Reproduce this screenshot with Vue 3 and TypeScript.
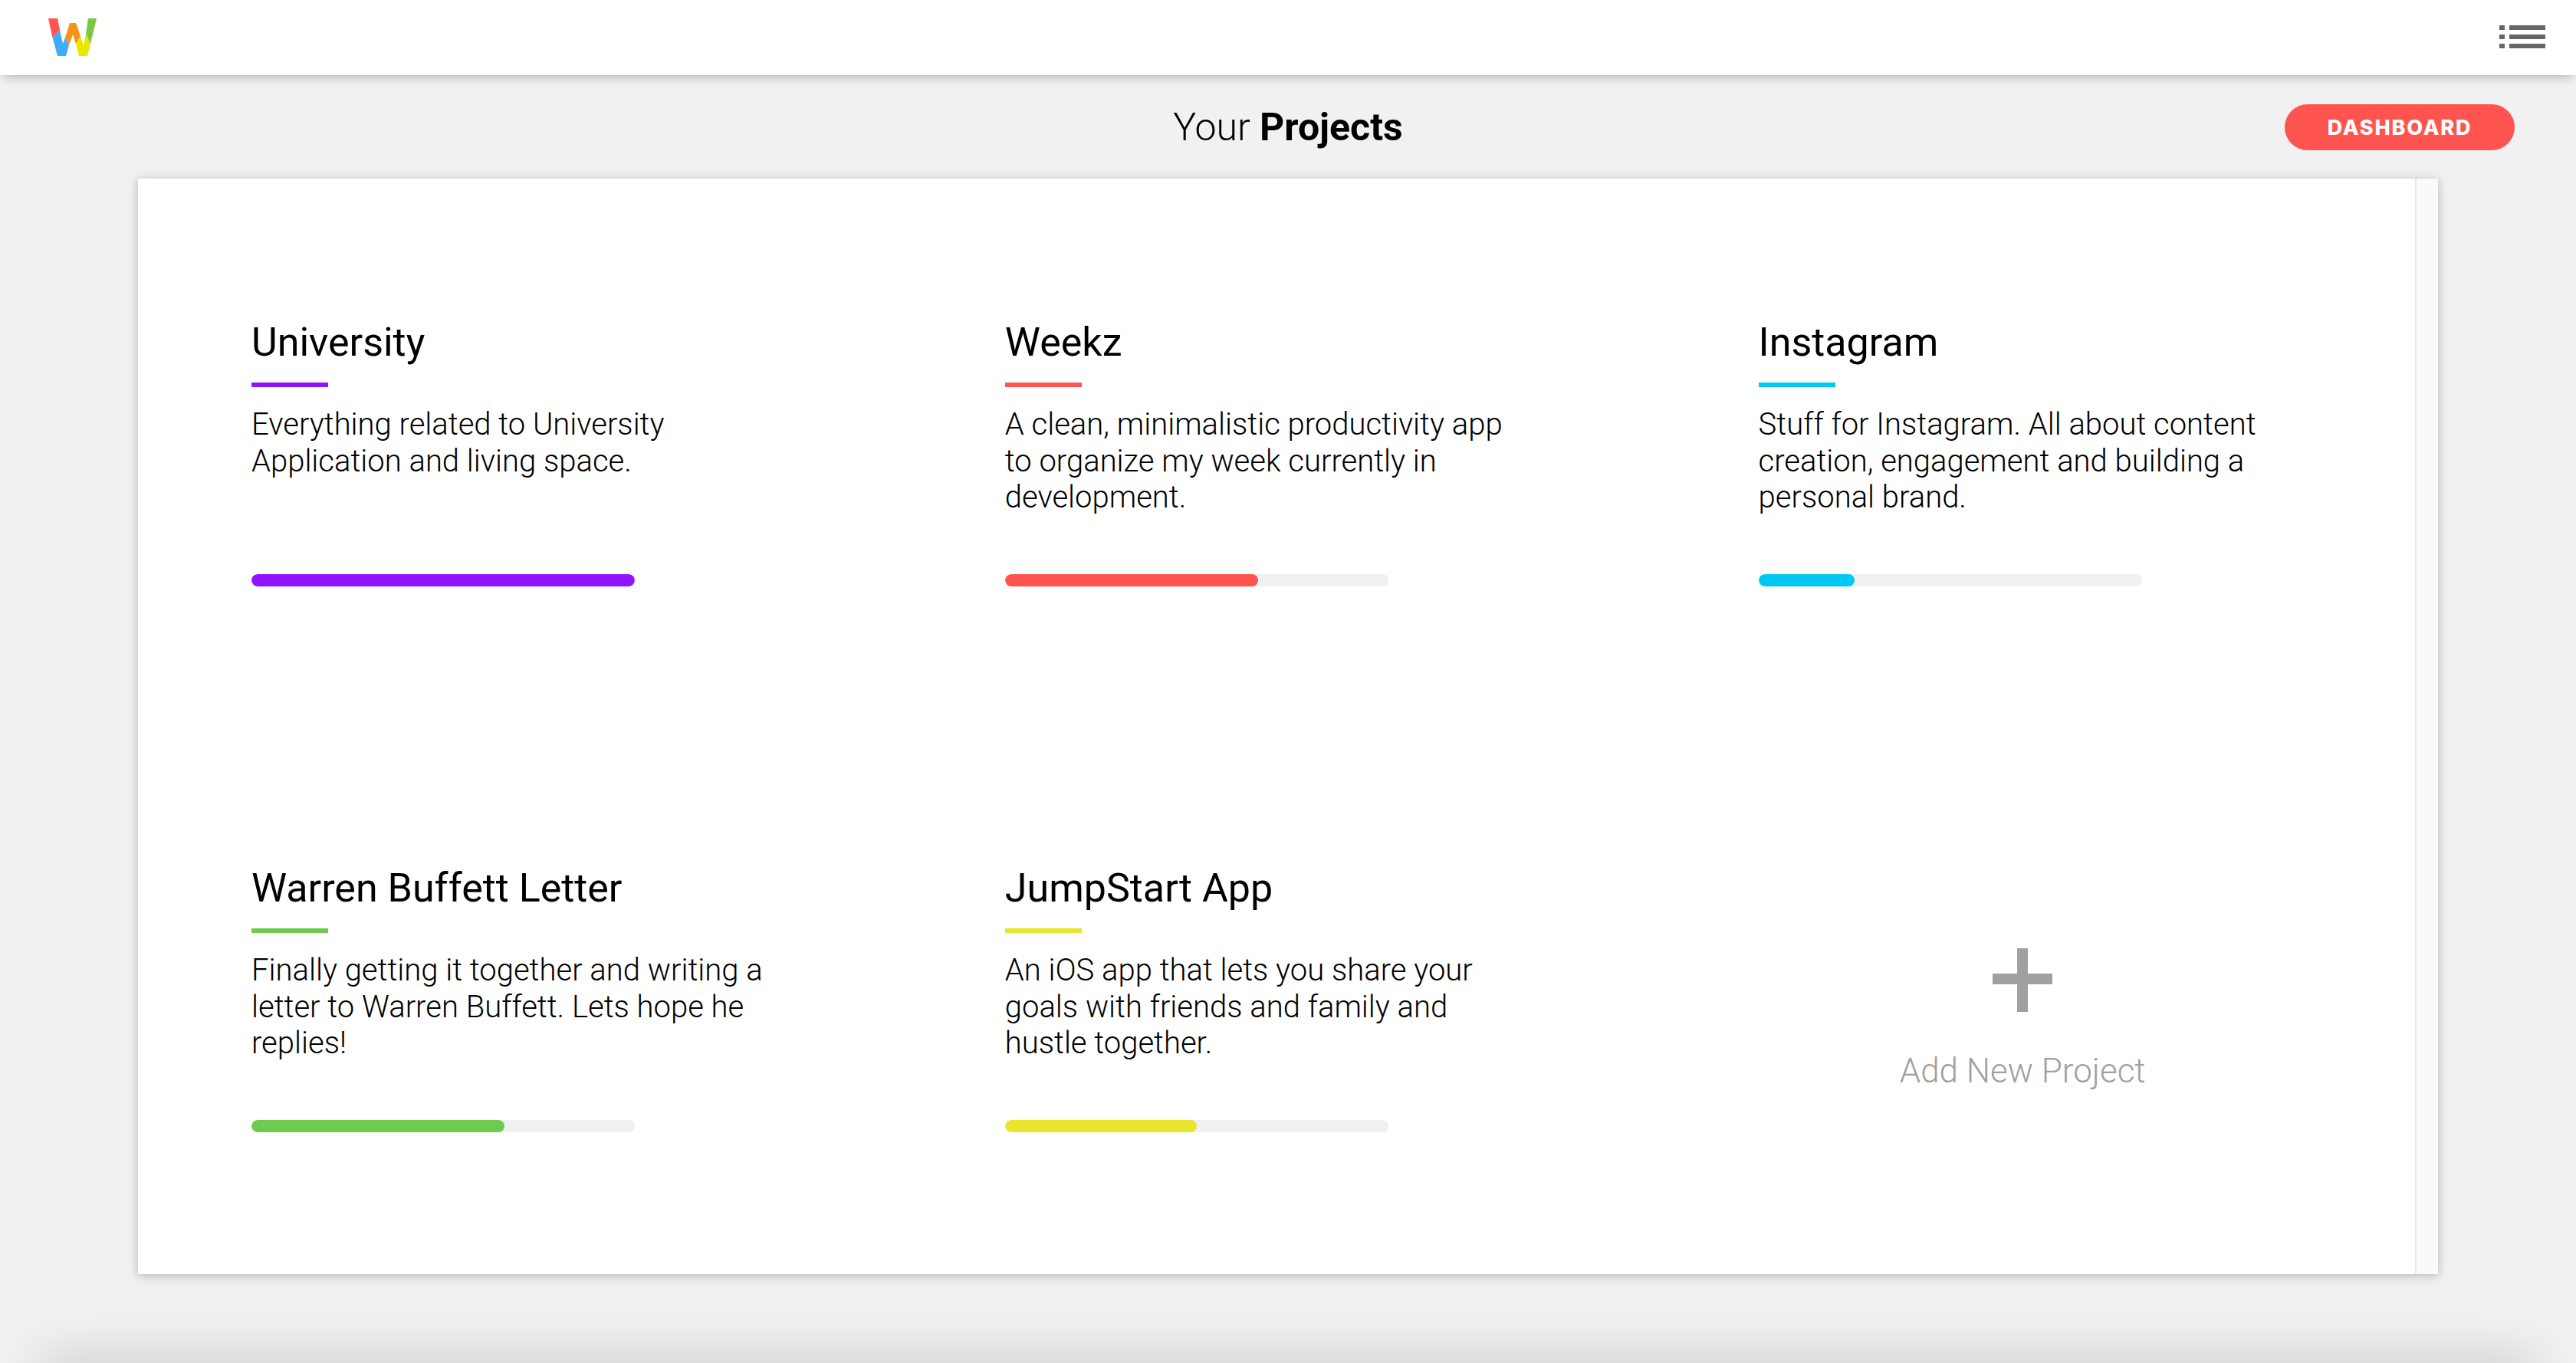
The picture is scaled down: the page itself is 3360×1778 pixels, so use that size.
<template>
  <div class="page">
    <header class="topbar">
      <svg class="logo" viewBox="63 24 64 50" width="64" height="50">
        <polygon points="63,24 75,24 78,39 68.5,49" fill="#ff5450" />
        <polygon points="68.5,49 78,39 82,57 85,49 90,59 86,73 75,73" fill="#3badfb" />
        <polygon points="85,49 91,30 99,30 105,47 99,57 95,45 90,59" fill="#f7931a" />
        <polygon points="99,57 105,47 109,59 112,44 118,57 114,73 103,73" fill="#e9e800" />
        <polygon points="115,24 126,24 118,57 112,44" fill="#7ac943" />
      </svg>
      <svg class="menu" viewBox="0 0 60 30" width="60" height="30">
        <g v-for="y in [0, 12, 24]" :key="y" fill="#666">
          <rect x="0" :y="y" width="7" height="6" />
          <rect x="13" :y="y" width="47" height="6" />
        </g>
      </svg>
    </header>

    <div class="heading">
      <h1>Your <strong>Projects</strong></h1>
      <button class="dash">DASHBOARD</button>
    </div>

    <main class="panel">
      <div class="grid">
        <section v-for="p in projects" :key="p.name" class="card">
          <h2>{{ p.name }}</h2>
          <div class="rule" :style="{ background: p.color }"></div>
          <p>{{ p.text }}</p>
          <div class="track">
            <div class="fill" :style="{ width: p.progress + '%', background: p.color }"></div>
          </div>
        </section>
        <section class="add">
          <svg class="plus" viewBox="0 0 78 83" width="78" height="83">
            <rect x="32" y="0" width="14" height="83" fill="#a0a0a0" />
            <rect x="0" y="33" width="78" height="14" fill="#a0a0a0" />
          </svg>
          <span>Add New Project</span>
        </section>
      </div>
      <div class="side"></div>
    </main>

    <div class="under"></div>
  </div>
</template>

<script setup lang="ts">
interface Project {
  name: string
  text: string
  color: string
  progress: number
}

const projects: Project[] = [
  {
    name: 'University',
    text: 'Everything related to University Application and living space.',
    color: '#9013fe',
    progress: 100
  },
  {
    name: 'Weekz',
    text: 'A clean, minimalistic productivity app to organize my week currently in development.',
    color: '#ff5450',
    progress: 66
  },
  {
    name: 'Instagram',
    text: 'Stuff for Instagram. All about content creation, engagement and building a personal brand.',
    color: '#00c8f0',
    progress: 25
  },
  {
    name: 'Warren Buffett Letter',
    text: 'Finally getting it together and writing a letter to Warren Buffett. Lets hope he replies!',
    color: '#6fcb4f',
    progress: 66
  },
  {
    name: 'JumpStart App',
    text: 'An iOS app that lets you share your goals with friends and family and hustle together.',
    color: '#e9e52c',
    progress: 50
  }
]
</script>

<style>
html,
body {
  margin: 0;
  background: #f1f1f1;
}
</style>

<style scoped>
.page {
  position: relative;
  height: 1778px;
  overflow: hidden;
  font-family: Roboto, "Liberation Sans", sans-serif;
  color: #000;
}

.topbar {
  position: relative;
  z-index: 2;
  height: 98px;
  background: #fff;
  box-shadow: 0 6px 14px -5px rgba(0, 0, 0, 0.3);
  display: flex;
  align-items: flex-start;
  justify-content: space-between;
  padding: 0 40px 0 63px;
}

.logo {
  margin-top: 24px;
}

.menu {
  margin-top: 33px;
}

.heading {
  position: relative;
  height: 135px;
  display: flex;
  align-items: center;
  justify-content: center;
}

h1 {
  margin: 0;
  font-size: 50px;
  font-weight: 300;
}

h1 strong {
  font-weight: 700;
}

.dash {
  position: absolute;
  left: 2980px;
  top: 38px;
  width: 300px;
  height: 60px;
  border: 0;
  border-radius: 30px;
  background: #ff5450;
  color: #fff;
  font-family: Inter, sans-serif;
  font-size: 27px;
  font-weight: 800;
  letter-spacing: 1.8px;
}

.panel {
  margin: 0 180px;
  height: 1429px;
  background: #fff;
  box-shadow: 0 2px 12px rgba(0, 0, 0, 0.25);
  display: flex;
}

.grid {
  flex: 1;
  min-width: 0;
  display: grid;
  grid-template-columns: repeat(3, 982.8px);
  grid-auto-rows: 712px;
  padding: 182px 0 0 148px;
}

.side {
  width: 28px;
  flex: none;
  border-left: 2px solid #e8e8e8;
  background: #fafafa;
}

.card h2 {
  margin: 0;
  font-size: 52px;
  font-weight: 400;
  line-height: 64px;
}

.rule {
  width: 100px;
  height: 6px;
  margin-top: 20px;
}

.card p {
  margin: 25px 0 0;
  width: 684px;
  height: 219px;
  font-size: 40px;
  font-weight: 300;
  line-height: 47.6px;
}

.track {
  width: 500px;
  height: 16px;
  border-radius: 8px;
  background: #f0f0f0;
  overflow: hidden;
}

.fill {
  height: 100%;
  border-radius: 8px;
}

.add {
  width: 689px;
  display: flex;
  flex-direction: column;
  align-items: center;
  padding-top: 110px;
  color: #a0a0a0;
  font-size: 44px;
  font-weight: 300;
}

.add span {
  margin-top: 51px;
}

.under {
  position: absolute;
  left: 50px;
  right: 50px;
  top: 1778px;
  height: 40px;
  border-radius: 40px;
  box-shadow: 0 0 70px rgba(0, 0, 0, 0.22);
}
</style>
